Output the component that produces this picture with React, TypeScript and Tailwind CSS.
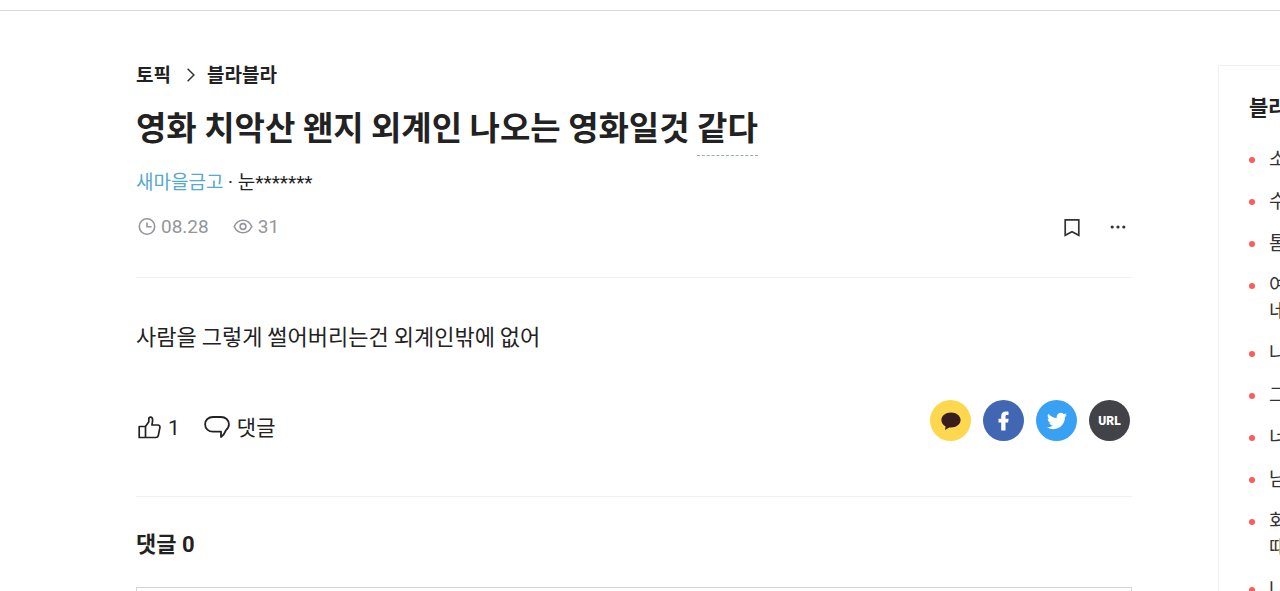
import { useState } from "react";

const related = [
  ["소"],
  ["수"],
  ["톰"],
  ["여", "네"],
  ["나"],
  ["그"],
  ["너"],
  ["남"],
  ["회", "때"],
  ["나"],
];

function ShareButtons() {
  return (
    <div className="flex gap-3 pr-0.5">
      <button aria-label="KakaoTalk" className="size-[41px] rounded-full bg-[#fdd84e] flex items-center justify-center">
        <svg width="20" height="20" viewBox="0 0 20 20" fill="#3b1c1c">
          <path d="M10 1.400C4.600 1.400.4 4.700.4 9c0 2.700 1.600 5.100 4.200 6.400L4 19l4.200-2.600c.6.1 1.200.1 1.800.1 5.400 0 9.600-3.300 9.600-7.500S15.400 1.400 10 1.400Z" />
        </svg>
      </button>
      <button aria-label="Facebook" className="size-[41px] rounded-full bg-[#4267b2] flex items-center justify-center">
        <svg width="12" height="20" viewBox="0 0 12 20" fill="#fff">
          <path d="M3.200 19.500V11.500H.5V7.700h2.700V5.200C3.200 2.200 5 .5 7.900.5c1.300 0 2.600.2 2.600.2v3.300H9.100c-1.200 0-1.600.7-1.600 1.600v2.100h3.100l-.5 3.800H7.500v8Z" />
        </svg>
      </button>
      <button aria-label="Twitter" className="size-[41px] rounded-full bg-[#38a1f3] flex items-center justify-center">
        <svg width="20" height="20" viewBox="0 0 24 24" fill="#fff">
          <path d="M23.950 4.570a10 10 0 0 1-2.820.78 4.960 4.960 0 0 0 2.160-2.730c-.95.56-2 .96-3.130 1.190a4.920 4.920 0 0 0-8.380 4.480C7.690 8.090 4.070 6.130 1.640 3.160a4.920 4.920 0 0 0 1.520 6.570 4.900 4.900 0 0 1-2.230-.61v.06a4.920 4.920 0 0 0 3.950 4.830 5 5 0 0 1-2.210.08 4.940 4.940 0 0 0 4.600 3.420A9.870 9.870 0 0 1 0 19.540a13.990 13.990 0 0 0 7.550 2.210c9.050 0 14-7.500 14-13.980 0-.21 0-.42-.02-.63a9.940 9.940 0 0 0 2.420-2.570Z" />
        </svg>
      </button>
      <button className="size-[41px] rounded-full bg-[#424249] text-white text-xs font-black">URL</button>
    </div>
  );
}

export default function App() {
  const [comment, setComment] = useState("");

  return (
    <div className="overflow-hidden h-screen bg-white text-[#222] font-['Roboto','Noto_Sans_CJK_KR',sans-serif]">
      <header className="h-[11px] border-b border-[#d9d9d9]" />

      <div className="flex pl-[136px]">
        <main className="flex-1 min-w-0 pt-[51px]">
          {/* Breadcrumb */}
          <nav className="flex items-center text-[19px] leading-7 font-bold">
            <a href="#topics">토픽</a>
            <svg className="ml-4 mr-3" width="8" height="16" viewBox="0 0 8 16" fill="none" stroke="#333" strokeWidth="1.500">
              <path d="M.6 .8 6.900 7 .6 13.200" />
            </svg>
            <a href="#blabla">블라블라</a>
          </nav>

          <h1 className="mt-3.5 h-[52px] text-[33px] leading-[44px] font-bold whitespace-nowrap font-['Noto_Sans_CJK_KR',sans-serif]">
            영화 치악산 왠지 외계인 나오는 영화일것{" "}
            <span className="inline-block h-[52px] border-b border-dashed border-[#9ab]">같다</span>
          </h1>

          <p className="mt-[13px] text-[19px] leading-7">
            <a href="#company" className="text-[#56a9cf]">새마을금고</a> · 눈*******
          </p>

          {/* Post info */}
          <div className="mt-3.5 h-8 flex items-center justify-between">
            <div className="flex gap-6 text-[19px] text-[#94969b]">
              <span className="flex items-center gap-[5px]">
                <svg className="ml-0.5" width="18" height="18" viewBox="0 0 18 18" fill="none" stroke="currentColor" strokeWidth="1.600">
                  <circle cx="9" cy="8.500" r="7.700" />
                  <path d="M9 4.500V8.800h4.600" />
                </svg>
                08.28
              </span>
              <span className="flex items-center gap-[5px]">
                <svg width="20" height="18" viewBox="0 0 20 18" fill="none" stroke="currentColor" strokeWidth="1.600">
                  <path d="M1.200 8.500C3 4.500 6 2.200 10 2.200S17 4.500 18.800 8.500C17 12.500 14 14.800 10 14.800S3 12.500 1.200 8.500Z" />
                  <circle cx="10" cy="8.500" r="2.900" />
                </svg>
                31
              </span>
            </div>
            <div className="flex items-center gap-[30px] pr-1.5">
              <button aria-label="북마크">
                <svg width="16" height="19" viewBox="0 0 16 19" fill="none" stroke="#333" strokeWidth="1.700">
                  <path d="M1.200 1.800h13.600v15.500L8 13.800l-6.800 3.500Z" />
                </svg>
              </button>
              <button aria-label="더보기">
                <svg width="16" height="4" viewBox="0 0 16 4" fill="#333">
                  <circle cx="2.200" cy="2" r="1.600" />
                  <circle cx="8" cy="2" r="1.600" />
                  <circle cx="13.800" cy="2" r="1.600" />
                </svg>
              </button>
            </div>
          </div>

          <p className="mt-[34px] pt-[43px] border-t border-[#f0f0f0] text-[22px] leading-7 font-['Noto_Sans_CJK_KR',sans-serif]">
            사람을 그렇게 썰어버리는건 외계인밖에 없어
          </p>

          {/* Actions */}
          <div className="mt-[51px] pb-[52px] flex justify-between border-b border-[#f0f0f0]">
            <div className="flex gap-6 pt-3 text-[21px] leading-8">
              <button className="flex items-center gap-[7px]">
                <svg className="ml-0.5" width="23" height="25" viewBox="0 0 23 25" fill="none" stroke="#222" strokeWidth="1.700" strokeLinejoin="round">
                  <path d="M1.200 10.500h6.300v11H1.200ZM7.500 10.500l3.300-4.700V3.200c0-1.500.8-2 1.800-2 1.400 0 2 1.200 2 2.900 0 2-.5 3.900-.7 4.900h5.800c1.600 0 2.500 1.200 2.200 2.600l-1.500 7.600c-.3 1.500-1.200 2.300-2.500 2.300H7.500" />
                </svg>
                1
              </button>
              <button className="flex items-center gap-[7px]">
                <svg width="26" height="25" viewBox="0 0 26 25" fill="none" stroke="#222" strokeWidth="1.800" strokeLinejoin="round">
                  <path d="M9 1h8c4.500 0 7.900 3 7.900 7.200 0 2.500-1.200 4.500-2.900 5.900-1.200 3.200-2.900 5.400-5 6.900v-5.300H9C4.500 15.700 1.100 12.600 1.100 8.300S4.500 1 9 1Z" />
                </svg>
                댓글
              </button>
            </div>
            <ShareButtons />
          </div>

          <h2 className="mt-8 text-[22px] leading-8 font-bold">댓글 0</h2>
          <textarea
            aria-label="댓글"
            value={comment}
            onChange={(e) => setComment(e.target.value)}
            className="mt-[26px] block w-full h-32 border border-[#d4d4d4] resize-none outline-none"
          />
        </main>

        {/* Related posts, runs past the right edge */}
        <aside className="ml-[86px] -mr-[322px] mt-[54px] w-96 shrink-0 border border-[#f0f0f0] pl-[30px] pt-[26px]">
          <h2 className="text-[21px] leading-8 font-bold whitespace-nowrap">블라</h2>
          <ul className="mt-[23px] space-y-4 text-[19px] leading-[26px] text-[#333]">
            {related.map((lines, i) => (
              <li key={i} className="flex items-start">
                <span className="mt-2.5 mr-3.5 size-1.5 rounded-full bg-[#ff5b5b]" />
                <a href="#post">
                  {lines.map((line) => (
                    <span key={line} className="block">{line}</span>
                  ))}
                </a>
              </li>
            ))}
          </ul>
        </aside>
      </div>
    </div>
  );
}
